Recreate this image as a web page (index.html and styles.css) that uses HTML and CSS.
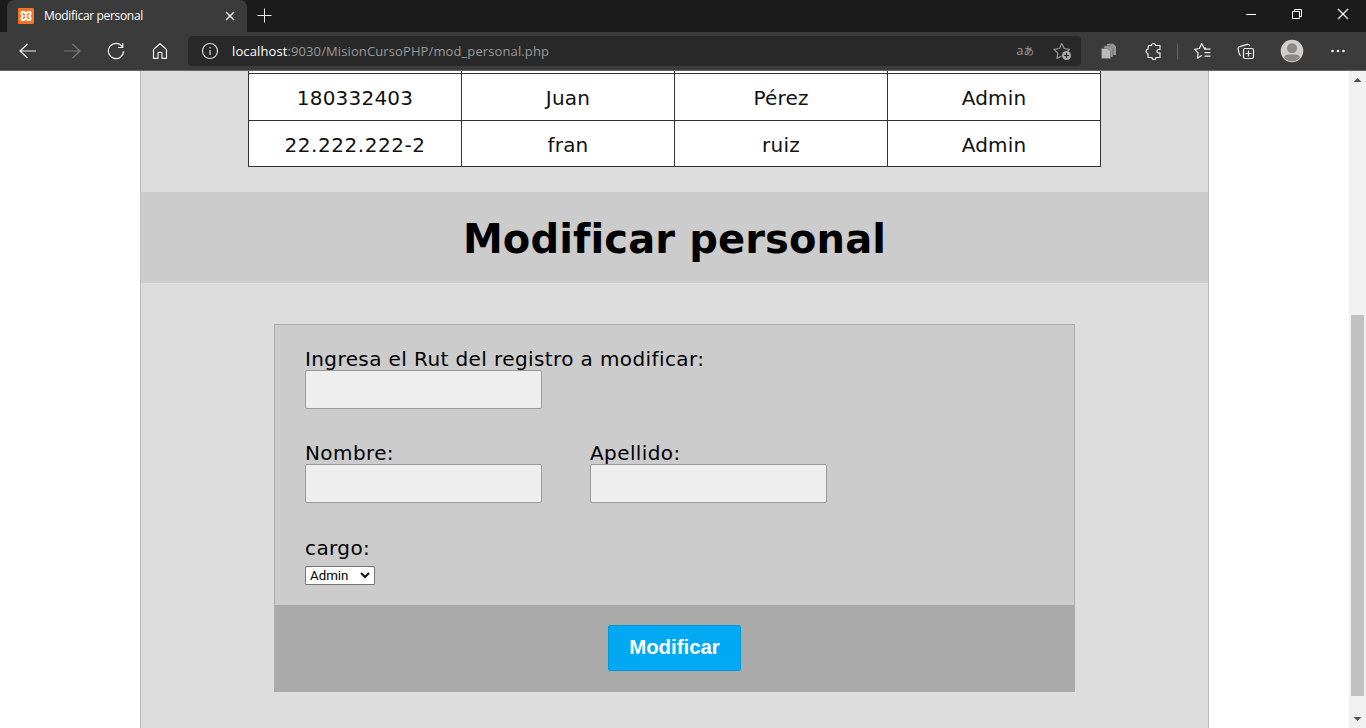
FILE: index.html
```html
<!DOCTYPE html>
<html lang="es">
<head>
<meta charset="utf-8">
<title>Modificar personal</title>
<link rel="stylesheet" href="styles.css">
</head>
<body>
<div class="browser">
  <div class="tabstrip">
    <div class="tab">
      <svg class="favicon" width="16" height="16" viewBox="0 0 16 16"><rect width="16" height="16" rx="1" fill="#f37623"/><path d="M4.500 4h1.700L8 5.800 9.800 4h1.700q1 0 1 1v1.200L11.200 8l1.300 1.800V11q0 1-1 1H9.800L8 10.200 6.200 12H4.500q-1 0-1-1V9.800L4.800 8 3.500 6.200V5q0-1 1-1z" fill="none" stroke="#fff" stroke-width="2"/><path d="M6.500 8h3" stroke="#fff" stroke-width="1.600"/></svg>
      <span class="tab-title">Modificar personal</span>
      <svg class="tab-close" width="10" height="10" viewBox="0 0 10 10"><path d="M1 1l8 8M9 1L1 9" stroke="#eee" stroke-width="1.500"/></svg>
    </div>
    <svg class="newtab" width="16" height="16" viewBox="0 0 16 16"><path d="M7.500 .5v14M.5 7.500h14" stroke="#eee" fill="none"/></svg>
    <svg class="winctl" width="112" height="16" viewBox="0 0 112 16"><g fill="none" stroke="#fff"><path d="M1 7.500h10"/><path d="M47.500 4.500h7v7h-7zM49.500 4.500v-2h7v7h-2"/><path d="M93 2l10 10M103 2L93 12" stroke-width="1.200"/></g></svg>
  </div>
  <div class="toolbar">
    <div class="nav">
      <svg width="18" height="18" viewBox="0 0 18 18"><path d="M8.500 2L1 9l7.500 7M1 9h16" fill="none" stroke="#eee" stroke-width="1.200"/></svg>
      <svg width="18" height="18" viewBox="0 0 18 18"><path d="M9.500 2L17 9l-7.500 7M17 9H1" fill="none" stroke="#777" stroke-width="1.200"/></svg>
      <svg width="18" height="18" viewBox="0 0 18 18"><path d="M15.500 5A7.600 7.600 0 1 0 16.600 9M15.800 1v4.500h-4.600" fill="none" stroke="#eee" stroke-width="1.200"/></svg>
      <svg width="18" height="18" viewBox="0 0 18 18"><path d="M2.500 7.500L9 1.700l6.500 5.800v8.800H11v-5q0-1-1-1H8q-1 0-1 1v5H2.500z" fill="none" stroke="#eee" stroke-width="1.200" stroke-linejoin="round"/></svg>
    </div>
    <div class="address">
      <svg width="18" height="18" viewBox="0 0 18 18"><circle cx="9" cy="9" r="7.500" fill="none" stroke="#ddd" stroke-width="1.200"/><path d="M9 8v5M9 5v1.500" stroke="#ddd" stroke-width="1.200"/></svg>
      <span class="url"><b>localhost</b>:9030/MisionCursoPHP/mod_personal.php</span>
      <span class="translate">a<small>あ</small></span>
      <svg class="fav" width="18" height="18" viewBox="0 0 18 18"><path d="M8.500 14L4 16.500l.8-5.300L1 7.300l5.400-.8L8.800 1.600l2.400 4.900 5.300.8-2 1.900" fill="none" stroke="#999" stroke-width="1.200" stroke-linejoin="round"/><circle cx="13.500" cy="13.500" r="4.500" fill="#aaa"/><path d="M13.500 11v5M11 13.500h5" stroke="#292929" stroke-width="1.100"/></svg>
    </div>
    <svg class="tools" width="285" height="38" viewBox="1081 32 285 38">
      <g fill="#999"><path d="M1107 44l6-.5 3 3v8.500h-9z" /><path d="M1104 46l6-.5 3 3V57h-9z" stroke="#555" stroke-width=".6"/><path d="M1101.500 48.500h6l3 2.500v7.500h-9z" fill="#bbb" stroke="#666" stroke-width=".6"/></g>
      <g fill="none" stroke="#eee" stroke-width="1.200" stroke-linejoin="round">
        <path d="M1148.500 45.500h3q0-2 2-2t2 2h4.500v4h-1.500q-1.600 0-1.600 1.700t1.600 1.700h1.500V57.500h-4q0 2-2 2t-2-2h-4V53.500q-2-.3-2-2.200t2-2.200z"/>
        <path d="M1177.500 43.500v16" stroke="#5e5e5e"/>
        <path d="M1202 55.200l-4.500 3 .6-5.200-3.500-3.700 4.800-.8 2.300-5 2.300 4.500h2M1204 49.100h6.500M1204.500 52.600h6M1204.500 56.100h6"/>
        <rect x="1243.500" y="48.500" width="10" height="10" rx="1.500"/><path d="M1245.500 53.500h6M1248.500 50.500v6M1240.800 55.800q-1.400-1-1.700-2.500l-.9-4q-.5-2 1.500-2.700l7.500-2.200q2-.4 2.800 1.700"/>
      </g>
      <circle cx="1292" cy="51" r="11.300" fill="#d1cfcd"/><circle cx="1292" cy="48.300" r="5" fill="#8d8884"/><path d="M1284.300 58.300q0-3.800 4-3.800h7.400q4 0 4 3.800-3.300 3-7.700 3t-7.700-3z" fill="#8d8884"/>
      <g fill="#eee"><circle cx="1332.500" cy="51" r="1.300"/><circle cx="1338" cy="51" r="1.300"/><circle cx="1343.500" cy="51" r="1.300"/></g>
    </svg>
  </div>
  <div class="viewport">
    <main class="page">
      <table class="staff">
        <tr class="cut"><td></td><td></td><td></td><td></td></tr>
        <tr class="tall"><td>180332403</td><td>Juan</td><td>Pérez</td><td>Admin</td></tr>
        <tr class="last"><td class="rut">22.222.222-2</td><td>fran</td><td>ruiz</td><td>Admin</td></tr>
      </table>
      <h1 class="title"><span>Modificar personal</span></h1>
      <form class="form">
        <div class="fields">
          <label class="field wide">Ingresa el Rut del registro a modificar:<input class="input" type="text"></label>
          <div class="row">
            <label class="field">Nombre:<input class="input" type="text"></label>
            <label class="field">Apellido:<input class="input" type="text"></label>
          </div>
          <label class="field cargo">cargo:<span class="select"><span>Admin</span><svg width="10" height="7" viewBox="0 0 10 7"><path d="M1 1l4 4 4-4" fill="none" stroke="#111" stroke-width="2"/></svg></span></label>
        </div>
        <div class="actions"><button class="submit" type="button">Modificar</button></div>
      </form>
    </main>
    <div class="scrollbar">
      <svg width="17" height="17" viewBox="0 0 17 17"><path d="M4.500 11L8.500 7l4 4z" fill="#505050"/></svg>
      <div class="thumb"></div>
      <svg width="17" height="17" viewBox="0 0 17 17"><path d="M4.500 6L8.500 10l4-4z" fill="#505050"/></svg>
    </div>
  </div>
</div>
</body>
</html>
```
FILE: styles.css
```css
* { box-sizing: border-box; }
body { margin: 0; background: #fff; overflow: hidden; }
svg { display: block; flex: none; }
.browser { width: 1366px; height: 728px; display: flex; flex-direction: column; overflow: hidden; }
.tabstrip { height: 32px; flex: none; background: #1b1b1b; display: flex; align-items: center; font-family: "Open Sans", sans-serif; }
.tab { width: 240px; height: 32px; margin-left: 7px; padding: 0 12px 0 11px; background: #3b3b3b; border-radius: 7px 7px 0 0; display: flex; align-items: center; }
.tab-title { margin-left: 10px; padding-bottom: 1px; flex: 1; font-size: 12px; letter-spacing: -.33px; color: #fff; white-space: nowrap; }
.newtab { margin-left: 10px; }
.winctl { margin-left: auto; margin-right: 9px; margin-bottom: 2px; }
.toolbar { height: 39px; flex: none; background: #3b3b3b; border-bottom: 1px solid #666; display: flex; align-items: center; }
.nav { width: 188px; padding-left: 19px; display: flex; gap: 26px; }
.address { width: 893px; height: 30px; border-radius: 4px; background: #292929; display: flex; align-items: center; padding: 0 10px 0 13px; color: #999; font-family: "Open Sans", sans-serif; }
.url { margin-left: 13px; flex: 1; font-size: 13px; letter-spacing: .11px; white-space: nowrap; }
.url b { font-weight: 400; color: #fff; }
.translate { font: 13px/18px "Open Sans", "Noto Sans CJK JP", sans-serif; margin-right: 19px; padding-bottom: 2px; }
.translate small { font-size: 10.500px; }
.viewport { flex: 1; display: flex; min-height: 0; }
.page { width: 1069px; margin-left: 140px; background: #ddd; border: solid #bbb; border-width: 0 1px; font-family: Verdana, "DejaVu Sans", sans-serif; font-size: 20px; color: #000; }
.staff { width: 853px; margin: 0 0 25px 107px; border-collapse: separate; border-spacing: 0; table-layout: fixed; background: #fff; border-left: 1px solid #333; }
.staff td { padding: 0; height: 46px; line-height: 24px; border: solid #333; border-width: 0 1px 1px 0; text-align: center; letter-spacing: .2px; color: #111; }
.staff .tall td { height: 47px; padding-top: 2px; }
.staff .last td { padding-top: 2px; }
.staff .last .rut { letter-spacing: .55px; }
.staff .cut td { height: 3px; line-height: 0; }
.title { margin: 0; height: 91px; padding-top: 2px; background: #ccc; display: flex; align-items: center; justify-content: center; font-size: 40px; line-height: 48px; letter-spacing: .12px; }
.form { width: 801px; height: 368px; margin: 41px 0 0 133px; border: 1px solid #aaa; background: #ccc; display: flex; flex-direction: column; }
.fields { flex: 1; padding: 23px 30px 0; }
.field { display: block; width: 237px; line-height: 22px; white-space: nowrap; letter-spacing: .4px; }
.wide { width: 100%; }
.row { display: flex; gap: 48px; margin: 33px 0 34px; }
.input { display: block; width: 237px; height: 39px; border: 1px solid #999; border-radius: 2px; background: #eee; }
.cargo { line-height: 23px; }
.select { width: 70px; height: 19px; margin-top: 6px; padding: 0 4px; display: flex; align-items: center; justify-content: space-between; background: #fff; border: 1px solid #767676; border-radius: 1px; font: 13.300px "Roboto", sans-serif; letter-spacing: 0; }
.actions { height: 86px; background: #aaa; display: flex; justify-content: center; padding-top: 20px; }
.submit { width: 133px; height: 46px; border: 1px solid #0099dc; border-radius: 2px; background: #00a9f1; color: #fff; font: bold 20.400px Arial, "Liberation Sans", sans-serif; padding: 0 0 2px; }
.scrollbar { width: 17px; margin-left: auto; background: #f1f1f1; display: flex; flex-direction: column; }
.thumb { width: 13px; height: 381px; margin: 227px 0 auto 2px; flex: none; background: #c1c1c1; }
```
